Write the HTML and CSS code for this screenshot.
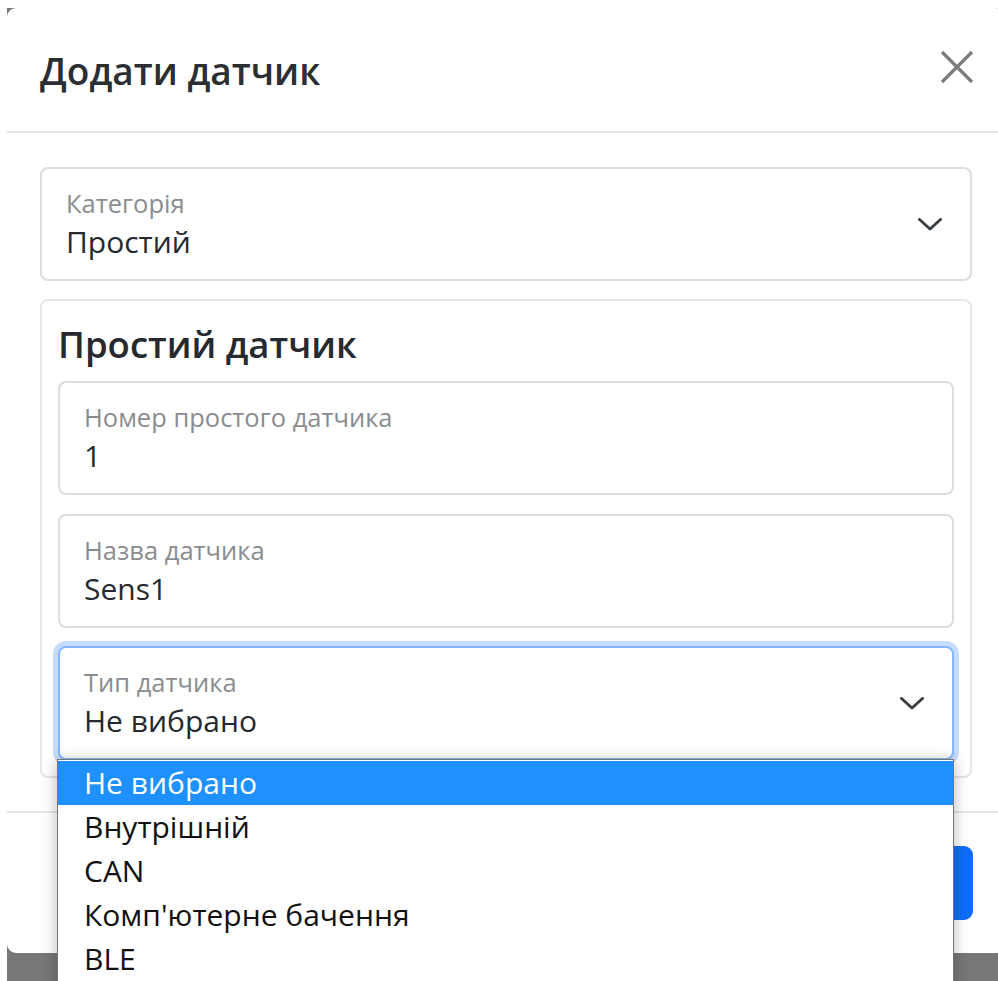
FILE: index.html
```html
<!DOCTYPE html>
<html lang="uk">
<head>
<meta charset="utf-8">
<title>Додати датчик</title>
<link rel="stylesheet" href="styles.css">
</head>
<body>
<div class="stage">
  <div class="modal">
    <header class="modal-header">
      <h5 class="modal-title">Додати датчик</h5>
      <button class="btn-close" type="button" aria-label="Закрити">
        <svg viewBox="0 0 34 34" width="34" height="34"><path d="M2 2 L32 32 M32 2 L2 32" /></svg>
      </button>
    </header>

    <div class="modal-body">
      <div class="field select-field">
        <div class="field-text">
          <span class="field-label">Категорія</span>
          <span class="field-value">Простий</span>
        </div>
        <svg class="chevron" viewBox="0 0 24 13" width="24" height="13"><path d="M1.5 1.5 L12 11 L22.5 1.5" /></svg>
      </div>

      <section class="card">
        <h4 class="card-title">Простий датчик</h4>
        <div class="card-fields">
          <div class="field">
            <div class="field-text">
              <span class="field-label">Номер простого датчика</span>
              <span class="field-value">1</span>
            </div>
          </div>
          <div class="field">
            <div class="field-text">
              <span class="field-label">Назва датчика</span>
              <span class="field-value">Sens1</span>
            </div>
          </div>
          <div class="select-wrap">
            <div class="field select-field is-focused">
              <div class="field-text">
                <span class="field-label">Тип датчика</span>
                <span class="field-value">Не вибрано</span>
              </div>
              <svg class="chevron" viewBox="0 0 24 13" width="24" height="13"><path d="M1.5 1.5 L12 11 L22.5 1.5" /></svg>
            </div>
            <ul class="options">
              <li class="option is-active">Не вибрано</li>
              <li class="option">Внутрішній</li>
              <li class="option">CAN</li>
              <li class="option">Комп'ютерне бачення</li>
              <li class="option">BLE</li>
            </ul>
          </div>
        </div>
      </section>
    </div>

    <footer class="modal-footer">
      <button class="btn-primary" type="button">Зберегти</button>
    </footer>
  </div>
</div>
</body>
</html>
```

FILE: styles.css
```css
html, body {
  margin: 0;
  padding: 0;
  background: #ffffff;
  height: 981px;
  overflow: hidden;
}

body {
  font-family: "Open Sans", "Noto Sans", sans-serif;
  color: #212529;
}

/* dimmed backdrop behind the dialog */
.stage {
  margin: 8px 0 0 7px;
  width: 1000px;
  height: 973px;
  background: #777777;
}

.modal {
  width: 998px;
  background: #ffffff;
  border-radius: 9px;
}

.modal-header {
  height: 125px;
  box-sizing: border-box;
  padding: 0 31px 0 33px;
  display: flex;
  align-items: center;
  justify-content: space-between;
  border-bottom: 2px solid #e3e6ea;
}

.modal-title {
  margin: 2px 0 0;
  font-size: 37px;
  font-weight: 600;
  line-height: 48px;
  color: #2b2e32;
}

.btn-close {
  width: 34px;
  height: 34px;
  padding: 0;
  margin: -6px 0 0;
  border: 0;
  background: transparent;
  display: flex;
}

.btn-close path {
  fill: none;
  stroke: #7b7b7b;
  stroke-width: 3.2;
}

.modal-body {
  padding: 34px 33px 33px 33px;
  display: flex;
  flex-direction: column;
  gap: 18px;
}

.field {
  height: 114px;
  box-sizing: border-box;
  border: 2px solid #dadde1;
  border-radius: 8px;
  padding: 18px 28px 0 24px;
  display: flex;
  align-items: flex-start;
  justify-content: space-between;
  background: #ffffff;
}

.field-text {
  display: flex;
  flex-direction: column;
}

.field-label {
  font-size: 25.5px;
  line-height: 32px;
  color: #8a8d90;
}

.field-value {
  margin-top: 5px;
  font-size: 30px;
  line-height: 36px;
  color: #26292d;
}

.chevron {
  align-self: center;
  margin-top: -18px;
  flex: none;
}

.chevron path {
  fill: none;
  stroke: #3a3f44;
  stroke-width: 3;
  stroke-linecap: round;
  stroke-linejoin: round;
}

.card {
  border: 2px solid #e3e6ea;
  border-radius: 8px;
  padding: 19px 16px 16px;
}

.card-title {
  margin: 0 0 13px 0;
  font-size: 36.5px;
  line-height: 48px;
  font-weight: 600;
  color: #26292d;
}

.card-fields {
  display: flex;
  flex-direction: column;
  gap: 18.5px;
}

.select-wrap {
  position: relative;
}

.is-focused {
  border-color: #86b7fe;
  box-shadow: 0 0 0 5px #c6dcfe;
}

/* open native option list */
.options {
  position: absolute;
  left: -1px;
  top: 113px;
  width: 897px;
  margin: 0;
  padding: 1px 0 0;
  list-style: none;
  background: #ffffff;
  border: 1px solid #767676;
  box-shadow: 0 2px 14px rgba(0, 0, 0, 0.28);
  height: 240px;
  box-sizing: border-box;
  z-index: 2;
}

.option {
  height: 44px;
  padding-left: 26px;
  font-size: 30px;
  line-height: 44px;
  color: #111111;
  white-space: nowrap;
}

.option.is-active {
  background: #1e90ff;
  color: #ffffff;
}

.modal-footer {
  height: 142px;
  box-sizing: border-box;
  border-top: 2px solid #e3e6ea;
  display: flex;
  align-items: center;
  justify-content: flex-end;
  padding: 0 32px 0 0;
}

.btn-primary {
  width: 220px;
  height: 74px;
  border: 0;
  border-radius: 9px;
  background: #0d6efd;
  color: #ffffff;
  font-family: inherit;
  font-size: 28px;
}
```
